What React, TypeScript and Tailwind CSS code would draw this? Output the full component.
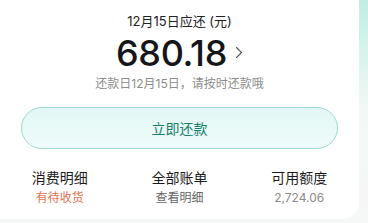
import React from 'react';

const font = { fontFamily: 'Inter, "Noto Sans CJK SC", sans-serif' };

const stats = [
  { title: '消费明细', sub: '有待收货', subClass: 'text-[#e2714f]' },
  { title: '全部账单', sub: '查看明细', subClass: 'text-[#666666]' },
  { title: '可用额度', sub: '2,724.06', subClass: 'text-[#8a8a8a]' },
];

export default function App() {
  return (
    <div
      className="w-[368px] h-[223px] overflow-hidden bg-gradient-to-b from-[#bfeee2] via-[#f3f8f7] to-[#f6f7f7]"
      style={font}
    >
      <div className="w-[359px] h-[219px] bg-white rounded-br-2xl flex flex-col items-center">
        {/* due amount */}
        <div className="mt-[12px] text-[13px] leading-[18px] text-[#222222]">12月15日应还 (元)</div>
        <div className="mt-[4px] flex items-center">
          <span className="text-[36px] leading-[38px] font-medium tracking-[-0.3px] text-[#16161a]">680.18</span>
          <svg className="ml-[8px] -mt-[2px]" width="8" height="13" viewBox="0 0 8 13" fill="none">
            <path d="M1.5 1.5 6.5 6.5 1.5 11.5" stroke="#555" strokeWidth="1.1" strokeLinecap="round" strokeLinejoin="round" />
          </svg>
        </div>
        <div className="mt-[4px] text-[12px] leading-[16px] text-[#8c8c8c]">还款日12月15日，请按时还款哦</div>

        {/* pay button */}
        <button className="mt-[15px] w-[317px] h-[42px] rounded-full border border-[#9fd8cf] bg-gradient-to-b from-[#e2f8f6] to-[#effbfa] text-[14px] text-[#16806a]">
          立即还款
        </button>

        {/* stats */}
        <div className="mt-[20px] w-full grid grid-cols-3">
          {stats.map((s) => (
            <div key={s.title} className="flex flex-col items-center">
              <span className="text-[14px] leading-[18px] text-[#1c1c1c]">{s.title}</span>
              <span className={`mt-[3px] text-[12px] leading-[16px] ${s.subClass}`}>{s.sub}</span>
            </div>
          ))}
        </div>
      </div>
    </div>
  );
}
